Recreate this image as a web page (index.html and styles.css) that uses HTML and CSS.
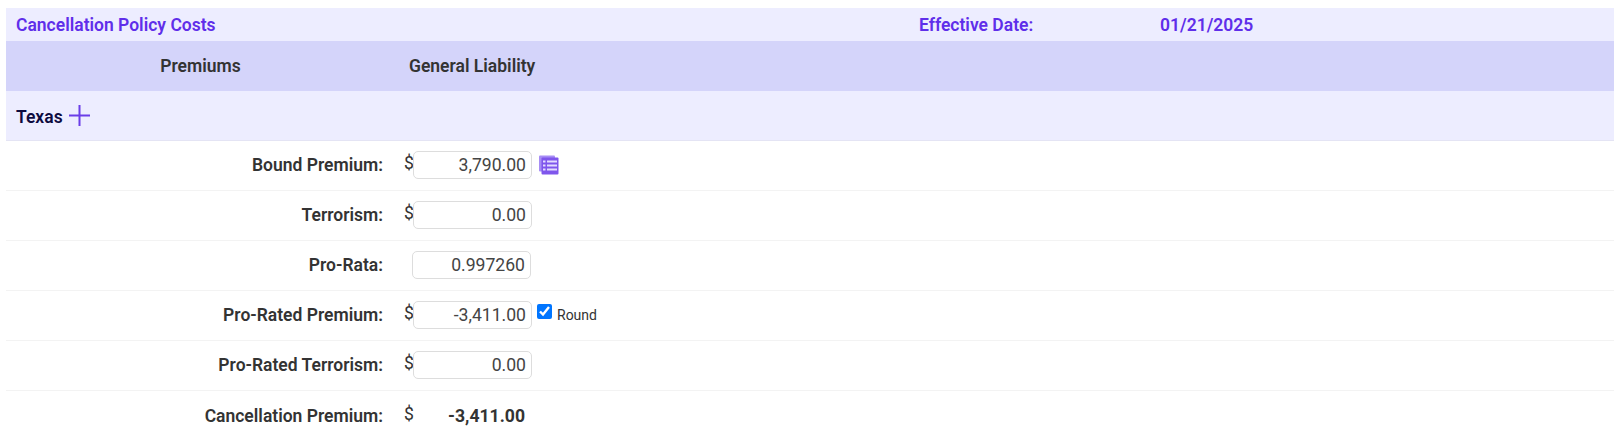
FILE: index.html
```html
<!DOCTYPE html>
<html lang="en">
<head>
    <meta charset="UTF-8">
    <title>Cancellation Policy Costs</title>
    <link rel="stylesheet" href="styles.css">
</head>
<body>
    <div class="title-bar">
        <div>Cancellation Policy Costs</div>
        <div>Effective Date:</div>
        <div>01/21/2025</div>
    </div>

    <div class="head-row">
        <div class="head-label">Premiums</div>
        <div class="head-value">General Liability</div>
    </div>

    <div class="state-row">
        <span>Texas</span>
        <svg class="plus" width="21" height="21" viewBox="0 0 21 21"><path d="M10.5 0v21M0 10.5h21"/></svg>
    </div>

    <div class="row">
        <div class="label">Bound Premium:</div>
        <div class="value">
            <span class="dollar">$</span>
            <input class="amount" value="3,790.00">
            <svg class="table-icon" width="20" height="20" viewBox="0 0 20 20">
                <rect class="back" x="0" y="0.5" width="16" height="16" rx="1"/>
                <rect class="front" x="2.5" y="2.5" width="17" height="17" rx="1"/>
                <path class="cells" d="M8 6.5h10M8 10.5h10M8 14.5h10M4 6.5h2.5M4 10.5h2.5M4 14.5h2.5"/>
            </svg>
        </div>
    </div>
    <div class="row">
        <div class="label">Terrorism:</div>
        <div class="value">
            <span class="dollar">$</span>
            <input class="amount" value="0.00">
        </div>
    </div>
    <div class="row">
        <div class="label">Pro-Rata:</div>
        <div class="value">
            <span class="dollar"></span>
            <input class="amount rate" value="0.997260">
        </div>
    </div>
    <div class="row">
        <div class="label">Pro-Rated Premium:</div>
        <div class="value">
            <span class="dollar">$</span>
            <input class="amount" value="-3,411.00">
            <label class="round"><input type="checkbox" checked> Round</label>
        </div>
    </div>
    <div class="row">
        <div class="label">Pro-Rated Terrorism:</div>
        <div class="value">
            <span class="dollar">$</span>
            <input class="amount" value="0.00">
        </div>
    </div>
    <div class="row last">
        <div class="label">Cancellation Premium:</div>
        <div class="value">
            <span class="dollar">$</span>
            <div class="total">-3,411.00</div>
        </div>
    </div>
</body>
</html>
```

FILE: styles.css
```css
html, body {
    height: 100%;
    overflow: hidden;
}

body {
    margin: 0;
    padding: 8px 6px 0;
    box-sizing: border-box;
    background: #fff;
    color: #333;
    font: 17.5px Roboto, sans-serif;
}

.title-bar {
    display: grid;
    grid-template-columns: 903px 241px 1fr;
    align-items: center;
    height: 33px;
    padding-left: 10px;
    background: #ededff;
    color: #5f2eea;
    font-weight: 600;
}

.head-row {
    display: grid;
    grid-template-columns: 389px 1fr;
    align-items: center;
    height: 50px;
    padding-bottom: 1px;
    box-sizing: border-box;
    background: #d4d4fa;
    font-weight: 600;
}

.head-label {
    text-align: center;
}

.head-value {
    padding-left: 14px;
}

.state-row {
    display: flex;
    align-items: center;
    gap: 6px;
    height: 49px;
    padding-left: 10px;
    background: #ededff;
    border-bottom: 1px solid #e4e4f4;
    color: #0d0b3f;
    font-weight: 600;
}

.state-row span {
    padding-top: 2px;
}

.plus {
    fill: none;
    stroke: #6a3de8;
    stroke-width: 2;
}

.row {
    display: grid;
    grid-template-columns: 389px 1fr;
    height: 50px;
    box-sizing: border-box;
    border-bottom: 1px solid #f3f3f3;
}

.row.last {
    border-bottom: 0;
}

.label {
    align-self: center;
    padding-right: 12px;
    padding-bottom: 1px;
    text-align: right;
    font-weight: 600;
}

.value {
    display: flex;
    align-items: center;
    padding-left: 9px;
    padding-bottom: 1px;
}

.dollar {
    width: 9px;
    margin-top: -4px;
    font-size: 17.6px;
}

.amount {
    width: 119px;
    height: 28px;
    box-sizing: border-box;
    padding: 0 5px;
    border: 1px solid #ddd;
    border-radius: 5px;
    outline: none;
    color: #444;
    font: 17.6px Roboto, sans-serif;
    text-align: right;
}

.amount.rate {
    margin-left: -1px;
}

.table-icon {
    margin-left: 7px;
}

.table-icon .back {
    fill: #a78df5;
}

.table-icon .front {
    fill: #7f56ec;
}

.table-icon .cells {
    fill: none;
    stroke: #e4dcff;
    stroke-width: 1.8;
}

.round {
    display: flex;
    align-items: center;
    gap: 5px;
    margin-left: 5px;
    font-size: 14px;
}

.round input {
    width: 15px;
    height: 15px;
    margin: 0 0 8px;
}

.total {
    width: 119px;
    padding-right: 7px;
    box-sizing: border-box;
    font-size: 17.6px;
    font-weight: 700;
    text-align: right;
}
```
